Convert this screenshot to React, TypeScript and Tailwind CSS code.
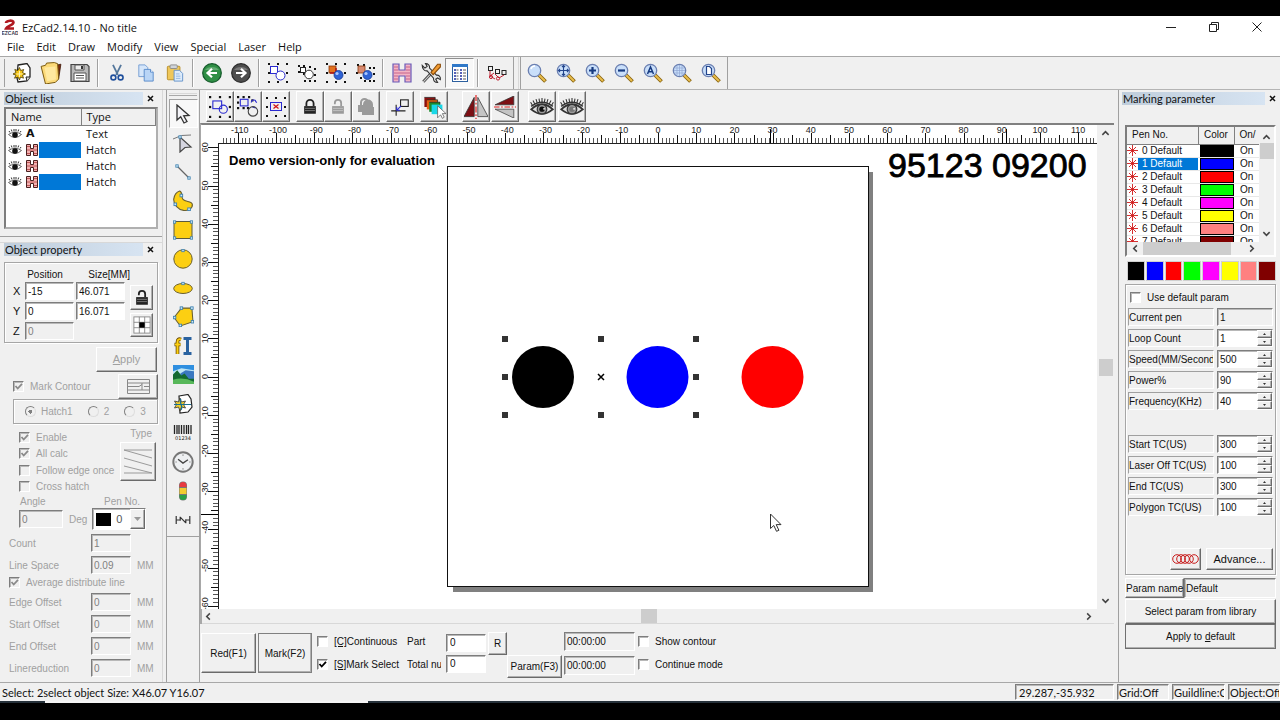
import type { ReactNode } from "react";

const SUNK = "border border-t-[#7d7d7d] border-l-[#7d7d7d] border-r-white border-b-white shadow-[inset_1px_1px_0_#b8b8b8]";
const RAISED = "border border-t-white border-l-white border-r-[#6a6a6a] border-b-[#6a6a6a] shadow-[inset_-1px_-1px_0_#b0b0b0] bg-[#f0f0f0]";
const GROUP = "border border-[#a6a6a6] shadow-[inset_1px_1px_0_#fff,1px_1px_0_#fff]";
const UI = "font-['Open_Sans','Noto_Sans',sans-serif]";
const CAPTION = "font-['Lato','Open_Sans',sans-serif]";

function Svg({ s = 20, children }: { s?: number; children: ReactNode }) {
  return (
    <svg width={s} height={s} viewBox="0 0 20 20" fill="none" aria-hidden="true" className="shrink-0">
      {children}
    </svg>
  );
}

function Dots({ pts }: { pts: number[][] }) {
  return (
    <>
      {pts.map(([x, y]) => (
        <rect key={`${x}-${y}`} x={x} y={y} width="2" height="2" fill="#111" />
      ))}
    </>
  );
}

const RING = [[0, 0], [9, 0], [18, 0], [0, 9], [18, 9], [0, 18], [9, 18], [18, 18]];

/* ---------- main toolbar icons ---------- */
const IconNew = () => (
  <Svg>
    <path d="M6 2l9-1.500L18 5l0 9-3 4-9 1-1-4z" fill="#fff" stroke="#222" strokeWidth="1.300" />
    <path d="M18 14l-4 0 1 4" stroke="#222" fill="#ddd" />
    <path d="M7.500 4.500l1.200 3 3-1-1.200 3 3 1.500-3 1.200 1 3-3-1.200L7.500 17 6 14l-3.500 1.200 1.500-3L1 11l3-1.500-1.200-3 3 1z" fill="#f5c518" stroke="#4a3b00" strokeWidth=".8" />
    <path d="M7.500 8v6M4.500 11h6" stroke="#fff4b0" />
  </Svg>
);
const IconOpen = () => (
  <Svg s={22}>
    <path d="M14 3l5-1-2 13-3 2z" fill="#7a2a10" stroke="#3a1505" strokeWidth=".7" />
    <path d="M1 4l4-1 1-2 7-.5 3 1 1 14-3 3-9 1.500z" fill="#fbd978" stroke="#7a5a10" strokeWidth=".9" />
    <path d="M4 5l10-1 .5 12-8 1.500z" fill="#ffe9a0" />
  </Svg>
);
const IconSave = () => (
  <Svg>
    <path d="M1 1.500h16l2 2V18.500H1z" fill="#b9b9b9" stroke="#444" strokeWidth="1.200" />
    <path d="M5 2h9v5H5z" fill="#eee" stroke="#555" />
    <path d="M11 3h2v3h-2z" fill="#333" />
    <path d="M4 10h12v8H4z" fill="#fff" stroke="#555" />
    <path d="M6 12.500h8M6 15h8" stroke="#555" />
  </Svg>
);
const IconCut = () => (
  <Svg s={18}>
    <path d="M5.500 1l5.500 11M14.500 1L9 12" stroke="#54779c" strokeWidth="2" />
    <circle cx="6" cy="15" r="2.700" stroke="#1f4f9c" strokeWidth="1.800" />
    <circle cx="14" cy="15" r="2.700" stroke="#1f4f9c" strokeWidth="1.800" />
  </Svg>
);
const IconCopy = () => (
  <Svg s={18}>
    <path d="M2 1h7l3 3v10H2z" fill="#d5e6fa" stroke="#6f9bd2" />
    <path d="M8 6h7l3 3v10H8z" fill="#b9d5f6" stroke="#5588c8" />
    <path d="M15 6v3h3" stroke="#5588c8" fill="#fff" />
  </Svg>
);
const IconPaste = () => (
  <Svg s={18}>
    <rect x="1.500" y="2.500" width="14" height="15" rx="1" fill="#efc75a" stroke="#b58a22" />
    <rect x="4.500" y="1" width="8" height="4" rx="1" fill="#cfd4da" stroke="#888" />
    <path d="M9 7h6l3.500 3.500V19H9z" fill="#dcebfb" stroke="#5f8fc8" />
    <path d="M11 11h4M11 13.500h5M11 16h5" stroke="#8fb3df" />
  </Svg>
);
const IconArrowBall = ({ right = false }: { right?: boolean }) => (
  <Svg>
    <circle cx="10" cy="10" r="9.300" fill={right ? "#4d4d4d" : "#2f8f45"} stroke={right ? "#2a2a2a" : "#14592a"} strokeWidth="1.200" />
    <path d="M3 7a8 6 0 0 1 14 0z" fill="#fff" opacity=".25" />
    <path d={right ? "M5 10h9M10 5.800L14.500 10 10 14.200" : "M15 10H6M10 5.800L5.500 10l4.500 4.200"} stroke="#fff" strokeWidth="2.200" />
  </Svg>
);
const IconGroup = () => (
  <Svg>
    <Dots pts={RING} />
    <rect x="2.500" y="3.500" width="7" height="7" stroke="#2a2ad0" fill="#fff" />
    <circle cx="12.500" cy="12.500" r="4.500" stroke="#2a2ad0" fill="#fff" />
  </Svg>
);
const IconUngroup = () => (
  <Svg>
    <Dots pts={[[1, 2], [6, 2], [12, 3], [1, 8], [17, 5], [6, 10], [17, 11], [7, 17], [12, 17], [17, 17]]} />
    <rect x="3.500" y="4.500" width="5" height="5" stroke="#222" fill="#fff" />
    <circle cx="12" cy="11.500" r="4.300" stroke="#333" fill="#fff" />
  </Svg>
);
const IconCombine = ({ small = false }: { small?: boolean }) => (
  <Svg>
    <Dots pts={small ? [[2, 1], [8, 1], [14, 4], [18, 4], [1, 9], [18, 10], [5, 14], [9, 17], [14, 17], [18, 17]] : RING} />
    <rect x="3" y="3" width="7" height="7" fill={small ? "#d98a70" : "#e2711d"} stroke="#8a3a10" strokeWidth=".8" />
    {!small && <path d="M4 10h6V5" stroke="#b01010" strokeWidth="1.500" />}
    <circle cx="12.500" cy="12" r="4.500" fill="#2f63d6" stroke="#173a96" strokeWidth=".8" />
    <circle cx="11" cy="10.500" r="1.600" fill="#a9c6ff" />
  </Svg>
);
const IconHatch = () => (
  <Svg>
    <path d="M1 1h6v6h6V1h6v18h-6v-6H7v6H1z" fill="#f3b4c4" stroke="#6a5ab8" strokeWidth="1.200" />
    <path d="M2 4h4M2 7h4M2 10h16M2 13h4M2 16h4M14 4h4M14 7h4M14 13h4M14 16h4" stroke="#c25a86" strokeWidth=".9" />
  </Svg>
);
const IconTools = () => (
  <Svg s={22}>
    <path d="M10 10.500L3 18" stroke="#444" strokeWidth="2.600" />
    <path d="M10 10.500L3 18" stroke="#ccc" strokeWidth="1" />
    <path d="M2 3l2.500 2.500 2-1.500L5 1.500c2.500 0 4 1.500 3.700 4L15 12c2-.3 4 1 3.500 4l-2.500-1.500-1.700 1.200 1.700 3c-2.500 0-4-1.500-3.700-4L6.500 8C4 8.500 2 6 2 3z" fill="#e6e6e6" stroke="#333" />
    <path d="M10 9.500L16 2h2.500v2.500L12 11.500z" fill="#f09a30" stroke="#8a4c0a" />
  </Svg>
);
const IconList = () => (
  <Svg>
    <rect x="2.500" y="1.500" width="15" height="17" fill="#fff" stroke="#2c5f9e" />
    <path d="M2 1h16v3H2z" fill="#2f78c8" />
    <path d="M4 7h2M4 10h2M4 13h2M4 16h2M10 7h2M10 10h2M10 13h2M10 16h2" stroke="#1f2fa0" strokeWidth="1.300" />
    <path d="M6.500 7h2M6.500 10h2M6.500 13h2M6.500 16h2M13 7h3M13 10h3M13 13h3M13 16h3" stroke="#555" />
  </Svg>
);
const IconNodes = () => (
  <Svg>
    <rect x="1.500" y="3.500" width="4" height="4" stroke="#222" />
    <rect x="8.500" y="6.500" width="4" height="4" stroke="#222" />
    <rect x="15" y="7.500" width="4" height="4" stroke="#222" />
    <path d="M3 8v5l5 3M3 13l4-3M8 11l4 4 5-3" stroke="#c02030" />
    <circle cx="4" cy="14" r="1.600" stroke="#c02030" />
    <circle cx="11" cy="15.500" r="1.600" stroke="#c02030" />
  </Svg>
);
const IconZoom = ({ kind }: { kind: string }) => (
  <Svg>
    <path d="M12 12l6.500 6.500" stroke="#8a6510" strokeWidth="3.800" />
    <path d="M12 12l6 6" stroke="#e9bd4c" strokeWidth="2" />
    <circle cx="7.500" cy="7.500" r="6.200" fill="#c9dffa" stroke="#6b7fb0" strokeWidth="1.300" />
    {kind === "plain" && <path d="M4 6a4 4 0 0 1 4-3" stroke="#fff" strokeWidth="1.500" />}
    {kind === "pan" && <path d="M7.500 2.500v10M2.500 7.500h10M6 4l1.500-1.500L9 4M6 11l1.500 1.500L9 11M4 6L2.500 7.500 4 9M11 6l1.500 1.500L11 9" stroke="#24458c" strokeWidth="1.100" />}
    {kind === "plus" && <path d="M7.500 4v7M4 7.500h7" stroke="#163a80" strokeWidth="2.200" />}
    {kind === "minus" && <path d="M4 7.500h7" stroke="#163a80" strokeWidth="2.200" />}
    {kind === "all" && <path d="M4.500 11l3-7 3 7M5.500 8.800h4" stroke="#163a80" strokeWidth="1.500" />}
    {kind === "grid" && <path d="M5 3v9M7.500 2v11M10 3v9M3 5h9M2 7.500h11M3 10h9" stroke="#8fa6d2" strokeWidth=".7" />}
    {kind === "page" && <path d="M5.500 3.500h3l2 2v6h-5z" fill="#fff" stroke="#24458c" strokeWidth="1.200" />}
  </Svg>
);

/* ---------- object toolbar icons ---------- */
const IconPick = ({ mode }: { mode: "all" | "invert" | "delete" }) => (
  <Svg s={mode === "delete" ? 20 : 22}>
    <Dots pts={mode === "invert" ? [[0, 0], [5, 0], [10, 0], [0, 5], [13, 3], [0, 10], [5, 10], [9, 10]] : RING} />
    {mode === "all" && (
      <>
        <rect x="3.500" y="4.500" width="8" height="7" stroke="#2a2ad0" />
        <circle cx="13" cy="12" r="3.700" stroke="#2a2ad0" />
      </>
    )}
    {mode === "invert" && (
      <>
        <rect x="3" y="3" width="7" height="6" stroke="#2a2ad0" />
        <path d="M13 6c0-3 4-3 4-1l1 1m-4 4l3 1" stroke="#2a2ad0" />
        <circle cx="14.500" cy="14" r="4.300" stroke="#444" />
      </>
    )}
    {mode === "delete" && (
      <>
        <rect x="4.500" y="5.500" width="11" height="8" stroke="#2a2ad0" />
        <path d="M7.500 7.500l5 4M12.500 7.500l-5 4" stroke="#d01010" strokeWidth="1.200" />
      </>
    )}
  </Svg>
);
const IconLock = ({ open = false, tone = "#222" }: { open?: boolean; tone?: string }) => (
  <Svg s={18}>
    <path d={open ? "M13.500 9V5.500a3.500 3.500 0 0 0-7 0V7" : "M6 9V6a4 4 0 0 1 8 0v3"} stroke={tone} strokeWidth="2" />
    <rect x="3.500" y="9" width="13" height="8.500" fill={tone} />
    <path d="M4.500 11.500h11M4.500 14h11" stroke="#fff" strokeWidth=".7" opacity=".6" />
  </Svg>
);
const IconLockAll = () => (
  <Svg>
    <path d="M5 8V5.500a3.500 3.500 0 0 1 7 0V8" stroke="#9a9a9a" strokeWidth="2" />
    <path d="M2 8h12v7H2z" fill="#9a9a9a" />
    <path d="M8 11V7.500a4 4 0 0 1 8 0V11" fill="#9a9a9a" stroke="#9a9a9a" strokeWidth="2" />
    <path d="M6 10h12v8H6z" fill="#9a9a9a" />
  </Svg>
);
const IconOrigin = () => (
  <Svg s={22}>
    <rect x="10.500" y="3.500" width="7" height="6" stroke="#222" />
    <path d="M6.500 8v10M2 13.500h13" stroke="#222" />
    <path d="M11 9l-4 4m0-3v3h3" stroke="#2a2ad0" />
  </Svg>
);
const IconLayers = () => (
  <Svg s={24}>
    <path d="M2 2h9v8H2z" fill="#8a1010" />
    <path d="M4 4h9v8H4z" fill="#e06010" />
    <path d="M6 6h9v8H6z" fill="#1c8a2c" />
    <path d="M8 8h9v8H8z" fill="#1ad8e8" />
    <path d="M2 2h9v2M4 4h9v2M6 6h9v2" stroke="#222" strokeWidth=".6" />
    <path d="M13 9v10l2.500-2.500 1.500 3 1.500-1-1.500-3H20z" fill="#fff" stroke="#555" strokeWidth=".6" />
  </Svg>
);
const IconMirrorH = () => (
  <Svg s={24}>
    <path d="M8.500 2v16H0z" fill="#7d0f14" stroke="#333" strokeWidth=".7" />
    <path d="M11.500 2v16H20z" fill="#c4c4c4" stroke="#444" strokeWidth=".7" />
    <path d="M10 0v20" stroke="#e02020" strokeDasharray="5 1.500 1.500 1.500" />
  </Svg>
);
const IconMirrorV = () => (
  <Svg s={22}>
    <path d="M18 0v8H1z" fill="#7d0f14" stroke="#333" strokeWidth=".7" />
    <path d="M18 20v-8H1z" fill="#c4c4c4" stroke="#444" strokeWidth=".7" />
    <path d="M0 10h20" stroke="#e02020" strokeDasharray="5 1.500 1.500 1.500" />
  </Svg>
);
const IconEye = ({ gray = false }: { gray?: boolean }) => (
  <Svg s={24}>
    <path d="M1 12Q10 3.500 19 12 10 19.500 1 12z" fill="#dedede" stroke="#333" strokeWidth="1.500" />
    <circle cx="10" cy="11.800" r="4" fill="#999" stroke="#333" />
    <circle cx="10" cy="11.800" r="2.200" fill={gray ? "#777" : "#111"} />
    <path d="M11 11.500h1.500" stroke="#fff" strokeWidth="1.100" />
    <path d="M1 9.500Q10 2.500 19 9.500" stroke="#333" strokeWidth="1.200" />
    <path d="M2 8.500L.5 6M4 7.500L2.500 4.500M6 6.500L5 3.500M8 6l-.5-3M10 6V2.500M12 6l.5-3M14 6.500l1-3M16 7.500l1.500-3M18 8.500L19.500 6" stroke="#333" strokeWidth=".9" />
  </Svg>
);
const IconEyeSmall = () => (
  <svg width="14" height="12" viewBox="0 0 14 12" fill="none" aria-hidden="true">
    <path d="M.5 6.500Q7 2 13.500 6.500 7 12.500.5 6.500z" fill="#fff" stroke="#666" />
    <circle cx="7" cy="7" r="2.800" fill="#111" />
    <path d="M2 4.500L1 3M4 3.500l-.7-2M6 3.500V1M8 3.500V1M10 3.500l.7-2M12 4.500l1-1.500" stroke="#333" />
  </svg>
);
const IconHatchSmall = () => (
  <svg width="12" height="12" viewBox="0 0 12 12" fill="none" aria-hidden="true">
    <path d="M.5.500h4v4h3v-4h4v11h-4v-4h-3v4h-4z" fill="#f2b0b0" stroke="#4a2020" />
    <path d="M1 2.500h3M8 2.500h3M1 6h10M1 9.500h3M8 9.500h3" stroke="#b04040" strokeWidth=".8" />
  </svg>
);

/* ---------- drawing tool icons ---------- */
const Node = ({ x, y }: { x: number; y: number }) => <rect x={x - 1.2} y={y - 1.2} width="2.400" height="2.400" fill="#cfe8f5" stroke="#3a7fb0" strokeWidth=".8" />;
const drawTools: { name: string; icon: ReactNode }[] = [
  { name: "Pick", icon: <Svg><path d="M4 1v15l3.700-3.200 3.300 6.200 3-1.500-3.300-5.700 5.300-.3z" fill="#f4f4f8" stroke="#333" strokeWidth="1.300" /></Svg> },
  { name: "Node edit", icon: <Svg><path d="M0 6Q8 1 18 2" stroke="#777" /><path d="M7 4v15l5-4.500 6-.5z" fill="#d5d5e0" stroke="#444" strokeWidth="1.200" /><Node x={7} y={4} /></Svg> },
  { name: "Line", icon: <Svg><path d="M4 4l12 12" stroke="#666" strokeWidth="1.300" /><Node x={4} y={4} /><Node x={16} y={16} /></Svg> },
  { name: "Curve", icon: <Svg s={22}><path d="M7 1C10 2 8 6 10 8.500 12 11 18 10 18.500 13 19 17 14.500 19 10.500 18.500 5 17.500 1.500 13 1.500 8.500 2 5 4 2 7 1z" fill="#fccf12" stroke="#6a6030" /><Node x={3} y={13} /><Node x={8.500} y={5} /><Node x={15.500} y={17.500} /></Svg> },
  { name: "Rectangle", icon: <Svg><rect x="1" y="1.500" width="18" height="17" fill="#fccf12" stroke="#5a5a40" /><Node x={1.500} y={2} /><Node x={18.500} y={2} /><Node x={1.500} y={18} /><Node x={18.500} y={18} /></Svg> },
  { name: "Circle", icon: <Svg><circle cx="10" cy="10" r="9.200" fill="#fccf12" stroke="#6a6030" /><Node x={10} y={1.500} /></Svg> },
  { name: "Ellipse", icon: <Svg><ellipse cx="10" cy="10.500" rx="9.300" ry="5" fill="#fccf12" stroke="#6a6030" /><Node x={10} y={5.500} /></Svg> },
  { name: "Polygon", icon: <Svg s={21}><path d="M1 11l7-9h10l1 13-12 4z" fill="#fccf12" stroke="#6a6030" /><Node x={1.500} y={11} /><Node x={8} y={2} /><Node x={18} y={2} /><Node x={18.500} y={15} /><Node x={7} y={18.500} /></Svg> },
  { name: "Text", icon: <Svg><path d="M8 3.500C5.500 2.500 4.500 4 4.500 6v12M1.500 8.500h6" stroke="#6a4a00" strokeWidth="3.600" /><path d="M8 3.500C5.500 2.500 4.500 4 4.500 6v12M2 8.500h5.500" stroke="#fccf12" strokeWidth="2" /><path d="M10.500 2.500h8M10.500 17.500h8M14.500 2v16" stroke="#2a62a0" strokeWidth="3" /></Svg> },
  { name: "Bitmap", icon: <Svg s={21}><path d="M0 1h20v18H0z" fill="#bfe6f5" /><path d="M0 1h20v5L8 4 0 7z" fill="#2f8fe0" /><path d="M7 9l5-3 8 1v8H7z" fill="#3a78c0" /><path d="M0 10l4-4 4 5 3-2 4 5h5v5H0z" fill="#146a30" /><path d="M0 15q10-3 20 2v2H0z" fill="#58b85a" /></Svg> },
  { name: "Vector file", icon: <Svg><path d="M6 2l9-1.500L18 5l1 8-4 5-8 1z" fill="#fff" stroke="#222" strokeWidth="1.200" /><path d="M7 4l1.500 4 4-1-2 3.500 2 3.500-4-1L7 17l-1.500-4-4 1 2-3.500-2-3.500 4 1z" fill="#f0d030" stroke="#333" strokeWidth=".8" /><path d="M1 10.500h17M8 5c-3 3 3 7 0 11" stroke="#1a7090" strokeWidth="1.200" /></Svg> },
  { name: "Barcode", icon: <svg width="20" height="18" viewBox="0 0 20 18" fill="none" aria-hidden="true"><path d="M1.500 1v9M4 1v9M6 1v9M8.500 1v9M11 1v9M13.500 1v9M15.500 1v9M18 1v9" stroke="#222" strokeWidth="1.300" /><text x="10" y="16" textAnchor="middle" fontSize="5" fontFamily="DejaVu Sans, sans-serif" fill="#222">01234</text></svg> },
  { name: "Delay timer", icon: <Svg s={22}><circle cx="10" cy="10" r="8.800" fill="#eef0f2" stroke="#777" strokeWidth="1.800" /><path d="M5.500 7.500L10 11l4.500-3" stroke="#444" strokeWidth="1.200" /><path d="M10 3v1.500M10 15.500V17M3 10h1.500M15.500 10H17" stroke="#999" /></Svg> },
  { name: "Input/output port", icon: <Svg><rect x="6" y="0.500" width="8" height="19" rx="4" fill="#777" /><path d="M6.500 6V4.500a3.500 3.500 0 0 1 7 0V6z" fill="#e83a40" /><rect x="6.500" y="7" width="7" height="6" fill="#f2cc30" /><path d="M6.500 14v1.500a3.500 3.500 0 0 0 7 0V14z" fill="#2aa048" /></Svg> },
  { name: "Encoder distance", icon: <Svg s={16}><path d="M1.500 5v10M1 10h5M6.500 6v5M6.500 6.500l7 7M13.500 9v5M13 10h6M18.500 5v10" stroke="#333" strokeWidth="1.500" /></Svg> },
];

/* ---------- shared controls ---------- */
function Sep() {
  return <div className="mx-[3px] h-7 w-0.5 shrink-0 border-l border-r border-l-[#a0a0a0] border-r-white" />;
}

function ToolBtn({ label, pressed = false, children }: { label: string; pressed?: boolean; children: ReactNode }) {
  return (
    <button type="button" aria-label={label} title={label} className={`flex h-[30px] w-[29px] shrink-0 items-center justify-center ${pressed ? "border border-t-[#909090] border-l-[#909090] border-r-white border-b-white bg-[#f8f8f8]" : ""}`}>
      {children}
    </button>
  );
}

function FlatBtn({ label, children }: { label: string; children: ReactNode }) {
  return (
    <button type="button" aria-label={label} title={label} className={`flex h-[31px] w-7 shrink-0 items-center justify-center ${RAISED}`}>
      {children}
    </button>
  );
}

function PanelTitle({ text }: { text: string }) {
  return (
    <div className={`flex h-[13px] items-center text-[11px] leading-[13px] ${CAPTION}`}>
      <h2 className="h-full flex-1 bg-linear-to-r from-[#bfcddb] to-[#d7e4f2] pl-px">{text}</h2>
      <button type="button" aria-label={`Close ${text}`} className="flex w-[15px] items-center justify-center">
        <svg width="7" height="7" viewBox="0 0 7 7" aria-hidden="true"><path d="M1 1l5 5M6 1L1 6" stroke="#111" strokeWidth="1.500" /></svg>
      </button>
    </div>
  );
}

function Check({ id, label, checked = false, disabled = false, children }: { id: string; label?: string; checked?: boolean; disabled?: boolean; children?: ReactNode }) {
  return (
    <div className={`flex items-center gap-[6px] ${disabled ? "text-[#a0a0a0]" : ""}`}>
      <span className="relative flex size-[11px] shrink-0">
        <input id={id} type="checkbox" defaultChecked={checked} disabled={disabled} className={`peer size-[11px] appearance-none ${SUNK} ${disabled ? "bg-[#f0f0f0]" : "bg-white"}`} />
        <svg viewBox="0 0 11 11" aria-hidden="true" className="pointer-events-none absolute inset-0 hidden peer-checked:block">
          <path d="M2.500 5l2.200 2.500L9 2.800" fill="none" stroke={disabled ? "#8a8a8a" : "#000"} strokeWidth="1.800" />
        </svg>
      </span>
      <label htmlFor={id} className="whitespace-nowrap">{children ?? label}</label>
    </div>
  );
}

function Field({ label, value, disabled = false, className }: { label: string; value: string; disabled?: boolean; className: string }) {
  return <input aria-label={label} defaultValue={value} disabled={disabled} className={`${SUNK} min-w-0 pl-[2px] ${disabled ? "bg-[#f0f0f0] text-[#808080]" : "bg-white"} ${className}`} />;
}

function Chevron({ dir }: { dir: "up" | "down" | "left" | "right" }) {
  const d = { up: "M1.500 6.500L5 3l3.500 3.500", down: "M1.500 3.500L5 7l3.500-3.500", left: "M6.500 1.500L3 5l3.500 3.500", right: "M3.500 1.500L7 5 3.500 8.500" }[dir];
  return <svg width="9" height="9" viewBox="0 0 10 10" aria-hidden="true"><path d={d} fill="none" stroke="#444" strokeWidth="1.700" /></svg>;
}

/* ---------- left dock ---------- */
const objects = [
  { type: "Text", selected: false },
  { type: "Hatch", selected: true },
  { type: "Hatch", selected: false },
  { type: "Hatch", selected: true },
];

function ObjectList() {
  return (
    <div className={`h-[122px] border-2 border-t-[#7d7d7d] border-l-[#7d7d7d] border-r-[#b0b0b0] border-b-[#b0b0b0] bg-white text-[11px] ${UI}`}>
      <table className="w-full table-fixed border-collapse">
        <thead>
          <tr className="h-4 bg-[#f0f0f0]">
            <th className="w-[75px] border-r border-b border-[#808080] p-0 pl-[5px] text-left leading-[15px] font-normal">Name</th>
            <th className="border-r border-b border-[#808080] p-0 pl-[5px] text-left leading-[15px] font-normal">Type</th>
          </tr>
        </thead>
        <tbody>
          {objects.map((o, i) => (
            <tr key={i} className="h-4">
              <td className="p-0">
                <div className="flex h-4 items-center gap-1 pl-0.5">
                  <IconEyeSmall />
                  {o.type === "Text" ? <b className="w-3 font-['DejaVu_Sans',sans-serif] leading-4">A</b> : <IconHatchSmall />}
                  <span className={`-ml-[3px] h-4 flex-1 ${o.selected ? "bg-[#0078d7]" : ""}`} />
                </div>
              </td>
              <td className="p-0 pl-[5px] leading-4">{o.type}</td>
            </tr>
          ))}
        </tbody>
      </table>
    </div>
  );
}

function Axis({ axis, pos, size }: { axis: string; pos: string; size?: string }) {
  return (
    <div className="flex h-5 items-center">
      <span className="w-5 pl-2 text-[11px]">{axis}</span>
      <Field label={`${axis} position`} value={pos} disabled={!size} className="h-[18px] w-[49px]" />
      {size && <Field label={`${axis} size`} value={size} className="ml-[2px] h-[18px] w-[49px]" />}
    </div>
  );
}

function HatchRow({ id, label, value, unit }: { id: string; label: string; value: string; unit?: boolean }) {
  return (
    <div className="flex h-[18px] items-center">
      <label htmlFor={id} className="w-[82px]">{label}</label>
      <input id={id} disabled defaultValue={value} className={`${SUNK} h-[18px] w-10 bg-[#f0f0f0] pl-[2px] text-[#808080]`} />
      {unit && <span className="pt-px pl-[6px]">MM</span>}
    </div>
  );
}

function LeftDock() {
  return (
    <aside className="flex w-[163px] shrink-0 flex-col border-r border-[#d8d8d8] pt-0.5">
      <div className="flex flex-col gap-[2px] px-[4px]">
        <PanelTitle text="Object list" />
        <ObjectList />
      </div>
      <div className="mt-[7px] h-[7px] shrink-0 border-t border-b border-t-[#a0a0a0] border-b-[#d8d8d8]" />
      <div className="flex flex-col px-[4px]">
        <PanelTitle text="Object property" />
        <div className={`mt-[6px] flex h-[81px] pt-1 ${GROUP}`}>
          <div className="flex w-[125px] flex-col">
            <div className="flex h-[14px] items-center pl-[5px]">
              <span className="w-[70px] text-center">Position</span>
              <span className="w-[50px] text-right">Size[MM]</span>
            </div>
            <Axis axis="X" pos="-15" size="46.071" />
            <Axis axis="Y" pos="0" size="16.071" />
            <Axis axis="Z" pos="0" />
          </div>
          <div className="mt-[18px] flex flex-col gap-[3px]">
            <button type="button" aria-label="Lock aspect ratio" className={`flex h-[25px] w-[23px] items-center justify-center ${RAISED}`}><IconLock open /></button>
            <button type="button" aria-label="Anchor point" className={`flex h-[24px] w-[23px] items-center justify-center ${RAISED}`}>
              <Svg s={18}><rect x="1" y="1" width="18" height="18" fill="#fff" stroke="#888" /><path d="M7 1v18M13 1v18M1 7h18M1 13h18" stroke="#888" /><rect x="7" y="7" width="6" height="6" fill="#000" /></Svg>
            </button>
          </div>
        </div>
        <button type="button" disabled className={`mt-[4px] ml-[92px] h-[25px] w-[61px] text-[11px] text-[#a0a0a0] ${RAISED}`}><u>A</u>pply</button>
        <div className="mt-[2px] flex h-[25px] items-center justify-between pl-[9px]">
          <Check id="contour" label="Mark Contour" checked disabled />
          <button type="button" disabled aria-label="Contour order" className={`flex h-[25px] w-10 items-center justify-center ${RAISED}`}>
            <svg width="23" height="15" viewBox="0 0 23 15" fill="none" aria-hidden="true"><path d="M.5.500h22v14H.5zM1 4h21M1 7.500h11M17 7.500h5M1 11h21M15 4v7M12 7.500l3-2" stroke="#888" /></svg>
          </button>
        </div>
        <div className={`ml-[9px] flex h-[25px] items-center gap-[15px] pl-[11px] text-[#a0a0a0] ${GROUP}`}>
          {["Hatch1", "2", "3"].map((t, i) => (
            <label key={t} className="flex items-center gap-[5px]">
              <input type="radio" name="hatch" disabled defaultChecked={i === 0} className="size-[11px] appearance-none rounded-full border border-t-[#808080] border-l-[#808080] border-r-[#ddd] border-b-[#ddd] bg-[#f0f0f0] checked:bg-[radial-gradient(circle,#808080_2px,#f0f0f0_2px)]" />
              {t}
            </label>
          ))}
        </div>
        <div className="mt-[5px] flex h-[66px] justify-between pl-[15px]">
          <div className="flex flex-col justify-around">
            <Check id="enable" label="Enable" checked disabled />
            <Check id="allcalc" label="All calc" checked disabled />
            <Check id="follow" label="Follow edge once" disabled />
            <Check id="cross" label="Cross hatch" disabled />
          </div>
          <div className="-mt-[2px] flex flex-col items-end pr-[2px] text-[#a0a0a0]">
            <span className="h-[15px] pr-1">Type</span>
            <button type="button" disabled aria-label="Hatch type" className={`flex h-[39px] w-9 items-center justify-center ${RAISED}`}>
              <svg width="30" height="27" viewBox="0 0 30 27" fill="none" aria-hidden="true"><path d="M1 2h28M1 2l28 8M1 10l28 8M1 18l28 7M1 25h28" stroke="#909090" strokeWidth=".9" /></svg>
            </button>
          </div>
        </div>
        <div className="flex h-[13px] items-center pl-4 text-[#a0a0a0]">
          <label htmlFor="angle" className="w-[84px]">Angle</label>
          <label htmlFor="pen">Pen No.</label>
        </div>
        <div className="flex h-[22px] items-center pl-[15px] text-[#a0a0a0]">
          <input id="angle" disabled defaultValue="0" className={`${SUNK} h-[18px] w-[44px] bg-[#f0f0f0] pl-[2px] text-[#808080]`} />
          <span className="w-[29px] pl-[6px]">Deg</span>
          <div className={`flex h-[22px] w-[54px] items-center bg-white pl-[3px] ${SUNK}`}>
            <span className="h-[13px] w-4 bg-black" />
            <select id="pen" disabled defaultValue="0" className="w-[19px] appearance-none bg-transparent pl-[5px] text-[11px] text-[#555]"><option>0</option></select>
            <span className={`flex h-full w-4 items-center justify-center ${RAISED}`}><svg width="7" height="4" viewBox="0 0 7 4" aria-hidden="true"><path d="M0 0h7L3.500 4z" fill="#999" /></svg></span>
          </div>
        </div>
        <div className="mt-[4px] flex flex-col gap-[4px] pl-[5px] text-[#a0a0a0]">
          <HatchRow id="count" label="Count" value="1" />
          <HatchRow id="space" label="Line Space" value="0.09" unit />
          <div className="-mt-[3px] flex h-[14px] items-center"><Check id="average" label="Average distribute line" checked disabled /></div>
          <HatchRow id="edge" label="Edge Offset" value="0" unit />
          <HatchRow id="start" label="Start Offset" value="0" unit />
          <HatchRow id="end" label="End Offset" value="0" unit />
          <HatchRow id="linered" label="Linereduction" value="0" unit />
        </div>
      </div>
    </aside>
  );
}

/* ---------- work area ---------- */
const UNIT = 3.82;
const OX = 457;
const OY = 251.5;
const range = (a: number, b: number) => Array.from({ length: b - a + 1 }, (_, i) => a + i);

function Workspace() {
  const f = "Liberation Sans, Arial, sans-serif";
  return (
    <svg className="min-h-0 w-full min-w-0 flex-1 bg-white" role="img" aria-label="Drawing workspace">
      <g shapeRendering="crispEdges">
        <path d="M17 18.500H2000M17.500 18V2000" stroke="#222" />
        {range(-114, 400).map((n) => {
          const x = Math.round(OX + n * UNIT) + 0.5;
          const h = n % 10 === 0 ? 10 : n % 5 === 0 ? 8 : 5;
          return <path key={n} d={`M${x} ${18 - h}V18`} stroke={n % 5 === 0 ? "#111" : "#555"} />;
        })}
        {range(-300, 60).map((n) => {
          const y = Math.round(OY - n * UNIT) + 0.5;
          const w = n % 10 === 0 ? 10 : n % 5 === 0 ? 7 : 5;
          return <path key={n} d={`M${17 - w} ${y}H17`} stroke={n % 5 === 0 ? "#111" : "#555"} />;
        })}
        <path d="M569.500 4V18M805.500 4V18M0 389.500H17" stroke="#000" />
      </g>
      <g fontFamily={f} fontSize="9" fill="#222" textAnchor="middle">
        {range(-11, 11).map((n) => (
          <text key={n} x={OX + n * 10 * UNIT + (n < 0 ? 2 : 0)} y="8">{n * 10}</text>
        ))}
        {range(-6, 6).map((n) => (
          <text key={n} transform={`translate(7 ${OY - n * 10 * UNIT + (n < 0 ? -2 : 0)}) rotate(-90)`}>{n * 10}</text>
        ))}
      </g>
      <g shapeRendering="crispEdges">
        <path d="M252 462h415V47h5v419.500H252z" fill="#808080" />
        <rect x="246.500" y="41.500" width="421" height="420" fill="#fff" stroke="#111" />
      </g>
      <text x="28" y="40" fontFamily={f} fontWeight="bold" fontSize="13" fill="#000">Demo version-only for evaluation</text>
      <text x="687" y="52" fontFamily={f} fontSize="34" fill="#000" stroke="#000" strokeWidth=".8">95123 09200</text>
      <circle cx="342" cy="252" r="31" fill="#000" />
      <circle cx="456.500" cy="252" r="31" fill="#00f" />
      <circle cx="571.500" cy="252" r="31" fill="#f00" />
      {[304, 400, 495].flatMap((x) => [214, 252, 290].map((y) => (x === 400 && y === 252 ? null : <rect key={`${x}-${y}`} x={x - 3} y={y - 3} width="6" height="6" fill="#333" />)))}
      <path d="M397 249l6 6M403 249l-6 6" stroke="#000" strokeWidth="1.500" />
      <path d="M569.500 389v14.500l3.300-3 2.700 5.800 2.400-1-2.700-5.700h4.800z" fill="#fff" stroke="#333" />
    </svg>
  );
}

function Center() {
  return (
    <main className="flex min-w-0 flex-1 flex-col">
      <div className="flex h-[33px] shrink-0 items-center pl-[6px]">
        <FlatBtn label="Select all"><IconPick mode="all" /></FlatBtn>
        <FlatBtn label="Invert selection"><IconPick mode="invert" /></FlatBtn>
        <FlatBtn label="Delete selection"><IconPick mode="delete" /></FlatBtn>
        <span className="w-[6px]" />
        <FlatBtn label="Lock"><IconLock /></FlatBtn>
        <FlatBtn label="Unlock"><IconLock tone="#9a9a9a" open /></FlatBtn>
        <FlatBtn label="Unlock all"><IconLockAll /></FlatBtn>
        <span className="w-[6px]" />
        <FlatBtn label="Put to origin"><IconOrigin /></FlatBtn>
        <span className="w-[6px]" />
        <FlatBtn label="Pick by pen"><IconLayers /></FlatBtn>
        <span className="w-[14px]" />
        <FlatBtn label="Mirror horizontally"><IconMirrorH /></FlatBtn>
        <span className="w-px" />
        <FlatBtn label="Mirror vertically"><IconMirrorV /></FlatBtn>
        <span className="w-[9px]" />
        <FlatBtn label="Show"><IconEye /></FlatBtn>
        <span className="w-[2px]" />
        <FlatBtn label="Hide"><IconEye gray /></FlatBtn>
      </div>
      <div className="flex min-h-0 flex-1 flex-col border-t-2 border-l-2 border-t-[#808080] border-l-[#a8a8a8]">
        <div className="flex min-h-0 flex-1">
          <div className="-ml-px flex min-w-0 flex-1 flex-col"><Workspace /></div>
          <div className="flex w-[17px] flex-col items-center justify-between py-1">
            <button type="button" aria-label="Scroll up"><Chevron dir="up" /></button>
            <span className="h-[17px] w-[14px] bg-[#cdcdcd]" />
            <button type="button" aria-label="Scroll down"><Chevron dir="down" /></button>
          </div>
        </div>
        <div className="flex h-[15px] items-center justify-between border-b border-[#d8d8d8] pr-[21px] pl-0.5">
          <button type="button" aria-label="Scroll left"><Chevron dir="left" /></button>
          <span className="h-full w-4 bg-[#cdcdcd]" />
          <button type="button" aria-label="Scroll right"><Chevron dir="right" /></button>
        </div>
      </div>
      <div className="flex h-[58px] shrink-0 items-center pl-px">
        <button type="button" className={`mr-0.5 h-10 w-[55px] ${RAISED}`}>Red(F1)</button>
        <button type="button" className={`h-10 w-[54px] outline outline-[#808080] -outline-offset-1 ${RAISED}`}>Mark(F2)</button>
        <div className="ml-[5px] flex h-9 w-[90px] flex-col justify-between">
          <Check id="cont"><u>[C]</u>Continuous</Check>
          <Check id="sel" checked><u>[S]</u>Mark Select</Check>
        </div>
        <div className="flex h-9 w-[34px] flex-col justify-between overflow-hidden whitespace-nowrap">
          <label htmlFor="part">Part</label>
          <label htmlFor="total">Total num</label>
        </div>
        <div className="ml-[5px] flex flex-col gap-[3px]">
          <input id="part" defaultValue="0" className={`h-[18px] w-10 bg-white pl-[3px] ${SUNK}`} />
          <input id="total" defaultValue="0" className={`h-[18px] w-10 bg-white pl-[3px] ${SUNK}`} />
        </div>
        <button type="button" className={`mb-[19px] ml-0.5 h-[23px] w-[19px] ${RAISED}`}>R</button>
        <button type="button" className={`mt-[27px] h-[23px] w-[55px] ${RAISED}`}>Param(F3)</button>
        <div className="ml-[2px] flex flex-col gap-[5px]">
          <output className={`h-[19px] w-[71px] pl-0.5 leading-[18px] ${SUNK}`}>00:00:00</output>
          <output className={`h-[19px] w-[71px] pl-0.5 leading-[18px] ${SUNK}`}>00:00:00</output>
        </div>
        <div className="ml-[3px] flex h-9 flex-col justify-between">
          <Check id="show" label="Show contour" />
          <Check id="mode" label="Continue mode" />
        </div>
      </div>
    </main>
  );
}

/* ---------- right dock ---------- */
const pens = [
  { name: "0 Default", color: "bg-[#000000]" },
  { name: "1 Default", color: "bg-[#0000ff]" },
  { name: "2 Default", color: "bg-[#ff0000]" },
  { name: "3 Default", color: "bg-[#00ff00]" },
  { name: "4 Default", color: "bg-[#ff00ff]" },
  { name: "5 Default", color: "bg-[#ffff00]" },
  { name: "6 Default", color: "bg-[#ff8080]" },
  { name: "7 Default", color: "bg-[#800000]" },
];

function PenTable() {
  return (
    <div className="flex h-[132px] flex-col border-2 border-t-[#7d7d7d] border-l-[#7d7d7d] border-r-white border-b-white">
      <div className="flex h-[115px]">
        <div className="min-w-0 flex-1 overflow-hidden bg-white">
          <table className="w-full table-fixed border-collapse leading-3">
            <thead>
              <tr className="h-[17px] bg-[#f0f0f0]">
                <th className="w-[71px] border-r border-b border-[#808080] p-0 pl-[5px] text-left font-normal">Pen No.</th>
                <th className="w-9 border-r border-b border-[#808080] p-0 text-center font-normal">Color</th>
                <th className="overflow-hidden border-b border-[#808080] p-0 pl-[5px] text-left font-normal whitespace-nowrap">On/</th>
              </tr>
            </thead>
            <tbody>
              {pens.map((p, i) => (
                <tr key={p.name} className="h-[13px] border-b border-[#e8e8e8]">
                  <td className="p-0">
                    <div className="flex h-3 items-center">
                      <svg width="11" height="11" viewBox="0 0 11 11" aria-hidden="true"><path d="M5.500 0v11M0 5.500h11M2 2l7 7M9 2L2 9" stroke="#d01818" strokeWidth=".9" /></svg>
                      <span className={`flex-1 pl-1 leading-3 ${i === 1 ? "bg-[#0078d7] text-white" : ""}`}>{p.name}</span>
                    </div>
                  </td>
                  <td className="p-0 pl-[2px]"><div className={`h-3 w-[34px] border border-black ${p.color}`} /></td>
                  <td className="p-0 pl-[6px]">On</td>
                </tr>
              ))}
            </tbody>
          </table>
        </div>
        <div className="flex w-[15px] flex-col items-center pt-1 pb-1">
          <button type="button" aria-label="Scroll pens up" className="h-3"><Chevron dir="up" /></button>
          <span className="h-4 w-[14px] bg-[#cdcdcd]" />
          <button type="button" aria-label="Scroll pens down" className="mt-auto"><Chevron dir="down" /></button>
        </div>
      </div>
      <div className="flex flex-1 items-center pr-[18px] pl-1">
        <button type="button" aria-label="Scroll pens left"><Chevron dir="left" /></button>
        <span className="ml-[3px] h-[13px] w-[88px] bg-[#cdcdcd]" />
        <button type="button" aria-label="Scroll pens right" className="ml-auto"><Chevron dir="right" /></button>
      </div>
    </div>
  );
}

const paramsA = [["Current pen", "1"], ["Loop Count", "1"], ["Speed(MM/Second)", "500"], ["Power%", "90"], ["Frequency(KHz)", "40"]];
const paramsB = [["Start TC(US)", "300"], ["Laser Off TC(US)", "100"], ["End TC(US)", "300"], ["Polygon TC(US)", "100"]];

function ParamRow({ label, value, readOnly = false }: { label: string; value: string; readOnly?: boolean }) {
  return (
    <div className="flex h-[18px] items-stretch gap-[3px]">
      <label htmlFor={label} className="min-w-0 flex-1 overflow-hidden border border-t-[#a0a0a0] border-r-white border-b-white border-l-[#a0a0a0] leading-[17px] whitespace-nowrap">{label}</label>
      <div className={`flex w-14 ${SUNK} ${readOnly ? "" : "bg-white"}`}>
        <input id={label} defaultValue={value} readOnly={readOnly} className="w-[39px] min-w-0 bg-transparent pl-[2px]" />
        {!readOnly && (
          <div className="flex w-[15px] flex-col">
            <button type="button" aria-label={`Increase ${label}`} className={`flex flex-1 items-center justify-center ${RAISED}`}><svg width="3" height="2" viewBox="0 0 3 2" aria-hidden="true"><path d="M0 2L1.500 0 3 2z" fill="#333" /></svg></button>
            <button type="button" aria-label={`Decrease ${label}`} className={`flex flex-1 items-center justify-center ${RAISED}`}><svg width="3" height="2" viewBox="0 0 3 2" aria-hidden="true"><path d="M0 0L1.500 2 3 0z" fill="#333" /></svg></button>
          </div>
        )}
      </div>
    </div>
  );
}

function RightDock() {
  return (
    <aside className="flex w-[162px] shrink-0 flex-col border-l border-[#a0a0a0] pt-0.5 pl-[3px]">
      <PanelTitle text="Marking parameter" />
      <div className="flex flex-col pt-[20px] pr-1 pl-[3px]">
        <PenTable />
        <div className="mt-[4px] flex gap-px pl-[2px]">
          {pens.map((p) => (
            <button key={p.name} type="button" aria-label={`Use pen ${p.name}`} className={`h-5 min-w-0 flex-1 border border-[#d0d0d0] ${p.color}`} />
          ))}
        </div>
        <div className={`mt-[3px] flex h-[291px] flex-col p-[2px] ${GROUP}`}>
          <div className="flex h-5 items-center pl-0.5"><Check id="usedef" label="Use default param" /></div>
          <div className="mt-px flex flex-col gap-[3px]">
            {paramsA.map(([l, v], i) => <ParamRow key={l} label={l} value={v} readOnly={i === 0} />)}
          </div>
          <div className="mt-[25px] flex flex-col gap-[3px]">
            {paramsB.map(([l, v]) => <ParamRow key={l} label={l} value={v} />)}
          </div>
          <div className="mt-auto mb-[2px] flex justify-end gap-[5px]">
            <button type="button" aria-label="Wobble" className={`flex h-[22px] w-[31px] items-center justify-center ${RAISED}`}>
              <svg width="28" height="12" viewBox="0 0 28 12" fill="none" aria-hidden="true">{[5, 9, 13, 17, 22].map((x) => <circle key={x} cx={x} cy="6" r="4.300" stroke="#c81c1c" />)}</svg>
            </button>
            <button type="button" className={`h-[22px] w-[67px] text-[11px] ${RAISED}`}>Advance...</button>
          </div>
        </div>
        <div className="mt-[3px] flex h-5">
          <button type="button" className={`w-[59px] whitespace-nowrap ${RAISED}`}>Param name</button>
          <Field label="Parameter name" value="Default" className="flex-1 !bg-[#f0f0f0] !pl-px" />
        </div>
        <button type="button" className={`mt-px h-[25px] ${RAISED}`}>Select param from library</button>
        <button type="button" className={`h-[25px] outline outline-[#707070] -outline-offset-1 ${RAISED}`}>Apply to <u>d</u>efault</button>
      </div>
    </aside>
  );
}

const menus = ["File", "Edit", "Draw", "Modify", "View", "Special", "Laser", "Help"];

export default function App() {
  return (
    <div className="flex min-h-screen flex-col overflow-hidden bg-[#f0f0f0] font-['Liberation_Sans',Arial,sans-serif] text-[10px] leading-[13px] text-[#111]">
      <div className="h-4 shrink-0 bg-black" />
      <header className={`flex h-[41px] shrink-0 flex-col border-b border-[#a8a8a8] bg-white text-[11px] ${UI}`}>
        <div className="flex h-[22px] items-center pl-0.5">
          <svg width="16" height="18" viewBox="0 0 16 18" aria-hidden="true">
            <path d="M4 5C4 2.500 11.500 1.500 11.500 4.500 11.500 7 5 8 4 10.500h8" fill="none" stroke="#b01820" strokeWidth="2.600" />
            <text x="8" y="17" textAnchor="middle" fontSize="5" fontWeight="bold" fontFamily="Liberation Sans, sans-serif" fill="#3a3a50">EZCAD</text>
          </svg>
          <h1 className="ml-1 flex-1">EzCad2.14.10 - No title</h1>
          <div className="flex">
            <button type="button" aria-label="Minimize" className="flex w-[43px] items-center justify-center"><svg width="10" height="10" viewBox="0 0 10 10" aria-hidden="true"><path d="M0 5.500h10" stroke="#222" /></svg></button>
            <button type="button" aria-label="Restore" className="flex w-[43px] items-center justify-center"><svg width="10" height="10" viewBox="0 0 10 10" fill="none" aria-hidden="true"><path d="M.5 2.500h7v7h-7zM2.500 2.500v-2h7v7h-2" stroke="#222" /></svg></button>
            <button type="button" aria-label="Close" className="mr-0.5 flex w-[43px] items-center justify-center"><svg width="10" height="10" viewBox="0 0 10 10" aria-hidden="true"><path d="M.5.500l9 9M9.500.500l-9 9" stroke="#222" /></svg></button>
          </div>
        </div>
        <nav className="flex h-[17px] items-center gap-3 pl-[7px]">
          {menus.map((m) => <button key={m} type="button">{m}</button>)}
        </nav>
      </header>

      <div className="flex h-[33px] shrink-0 items-center border-b border-[#b4b4b4]">
        <span className="ml-0.5 h-7 w-[3px] border-r border-[#a0a0a0]" />
        <span className="w-0.5" />
        <ToolBtn label="New"><IconNew /></ToolBtn>
        <ToolBtn label="Open"><IconOpen /></ToolBtn>
        <ToolBtn label="Save"><IconSave /></ToolBtn>
        <Sep />
        <ToolBtn label="Cut"><IconCut /></ToolBtn>
        <ToolBtn label="Copy"><IconCopy /></ToolBtn>
        <ToolBtn label="Paste"><IconPaste /></ToolBtn>
        <Sep />
        <ToolBtn label="Undo"><IconArrowBall /></ToolBtn>
        <ToolBtn label="Redo"><IconArrowBall right /></ToolBtn>
        <Sep />
        <ToolBtn label="Group"><IconGroup /></ToolBtn>
        <ToolBtn label="Ungroup"><IconUngroup /></ToolBtn>
        <ToolBtn label="Combine"><IconCombine /></ToolBtn>
        <ToolBtn label="Uncombine"><IconCombine small /></ToolBtn>
        <Sep />
        <ToolBtn label="Hatch"><IconHatch /></ToolBtn>
        <ToolBtn label="Options"><IconTools /></ToolBtn>
        <ToolBtn label="Object list" pressed><IconList /></ToolBtn>
        <Sep />
        <ToolBtn label="Input/output"><IconNodes /></ToolBtn>
        <span className="ml-0.5 h-8 w-px bg-[#a0a0a0]" />
        <span className="ml-1 h-8 w-[3px] border-r border-l border-r-[#a0a0a0] border-l-[#d8d8d8]" />
        <span className="w-px" />
        {["plain", "pan", "plus", "minus", "all", "grid", "page"].map((k) => (
          <ToolBtn key={k} label={`Zoom ${k}`}><IconZoom kind={k} /></ToolBtn>
        ))}
        <span className="ml-0.5 h-8 w-px bg-[#a0a0a0]" />
      </div>

      <div className="flex min-h-0 flex-1">
        <LeftDock />
        <div className="ml-[3px] flex w-[34px] shrink-0 flex-col border-r border-l border-[#a0a0a0]">
          <div className="flex flex-col items-center border-b border-[#a0a0a0] pb-0.5">
            <span className="mt-[3px] mb-[3px] h-[3px] w-7 border-t border-b border-t-[#d8d8d8] border-b-[#a8a8a8]" />
            {drawTools.map((t, i) => (
              <button key={t.name} type="button" aria-label={t.name} title={t.name} className={`flex h-[29px] w-[29px] items-center justify-center ${i === 0 ? "border border-t-[#a0a0a0] border-l-[#a0a0a0] border-r-white border-b-white bg-[#f8f8f8]" : ""}`}>
                {t.icon}
              </button>
            ))}
          </div>
        </div>
        <Center />
        <div className="w-1 shrink-0" />
        <RightDock />
      </div>

      <footer className={`flex h-[19px] shrink-0 items-center gap-[3px] overflow-hidden border-t border-[#a8a8a8] pl-0.5 text-[11px] whitespace-nowrap ${CAPTION}`}>
        <span className="flex-1">Select: 2select object Size: X46.07 Y16.07</span>
        <span className={`h-4 w-[99px] overflow-hidden pl-[3px] leading-4 ${SUNK}`}>29.287,-35.932</span>
        <span className={`h-4 w-[52px] overflow-hidden pl-px leading-4 ${SUNK}`}>Grid:Off</span>
        <span className={`h-4 w-[53px] overflow-hidden pl-px leading-4 ${SUNK}`}>Guildline:Off</span>
        <span className={`h-4 w-[52px] overflow-hidden pl-px leading-4 ${SUNK}`}>Object:Off</span>
      </footer>
      <div className="flex h-[2px] shrink-0 bg-[#26313a]">
        <span className="ml-[45px] w-[323px] bg-[#f4f4f4]" />
      </div>
      <div className="h-[17px] shrink-0 bg-black" />
    </div>
  );
}
